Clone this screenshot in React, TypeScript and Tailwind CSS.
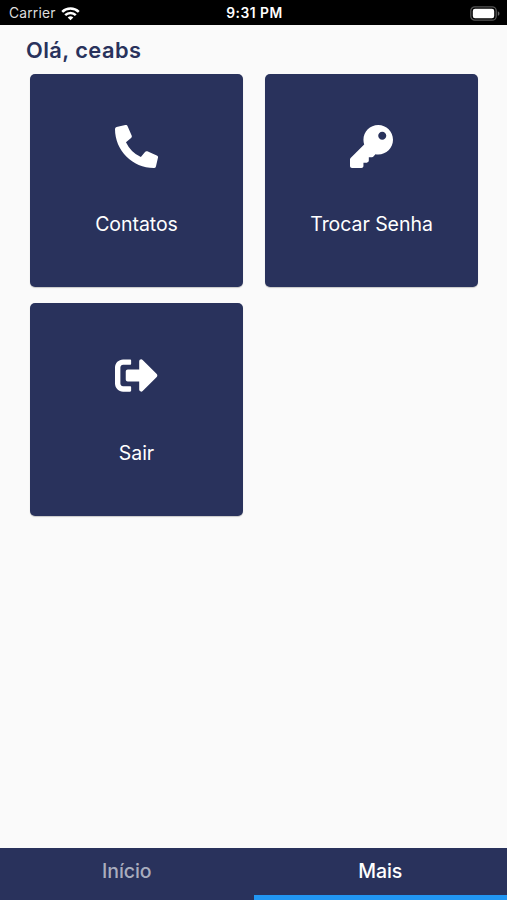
import type { IconType } from "react-icons";
import { FaKey, FaPhoneAlt, FaSignOutAlt } from "react-icons/fa";

interface MenuCardProps {
  title: string;
  icon: IconType;
}

const MenuCard: React.FC<MenuCardProps> = ({ title, icon: Icon }) => (
  <button className="flex h-[213px] w-[213px] flex-col items-center rounded-[5px] bg-[#29325c] pt-[51px] text-white shadow-[0_1px_1px_rgba(0,0,0,0.2)]">
    <Icon className="h-[43px] w-[43px]" />
    <span className="mt-[42px] text-[19.5px] leading-7 tracking-[-0.05px]">{title}</span>
  </button>
);

const WifiIcon: React.FC = () => (
  <svg className="h-[14px] w-[19px]" viewBox="0 0 19 14" fill="none" stroke="#fff" strokeWidth="2.5">
    <path d="M1.2 4.8a11.8 11.8 0 0 1 16.6 0" />
    <path d="M4.2 8.1a7.5 7.5 0 0 1 10.6 0" />
    <path d="M9.5 13.3 6.7 10.5a4 4 0 0 1 5.6 0z" fill="#fff" stroke="none" />
  </svg>
);

const BatteryIcon: React.FC = () => (
  <svg className="h-[15px] w-[30px]" viewBox="0 0 30 15">
    <rect x="0.8" y="0.8" width="25.4" height="13.4" rx="4" fill="none" stroke="#555" strokeWidth="1.3" />
    <rect x="2.8" y="2.8" width="21.4" height="9.4" rx="2.2" fill="#fff" />
    <path d="M27.8 5.2c2.2.8 2.2 3.8 0 4.6z" fill="#666" />
  </svg>
);

const StatusBar: React.FC = () => (
  <header className="grid h-[25px] grid-cols-3 items-center bg-black pt-[2px] pr-[7px] pl-[9px] text-white">
    <div className="flex items-center gap-[5px]">
      <span className="text-[13.8px] tracking-[0.2px] text-[#ddd]">Carrier</span>
      <WifiIcon />
    </div>
    <span className="text-center text-[13.8px] font-semibold tracking-[0.5px]">9:31 PM</span>
    <div className="flex justify-end">
      <BatteryIcon />
    </div>
  </header>
);

const App: React.FC = () => {
  return (
    <div className="flex h-screen flex-col bg-[#fafafa] font-['Inter',sans-serif]">
      <StatusBar />

      <main className="flex-1">
        <h1 className="mt-[10px] pl-[26px] text-[21.8px] leading-[30px] font-semibold tracking-[0.45px] text-[#29325c]">
          Olá, ceabs
        </h1>
        <div className="mt-[9px] grid grid-cols-[213px_213px] gap-x-[22px] gap-y-4 pl-[30px]">
          <MenuCard title="Contatos" icon={FaPhoneAlt} />
          <MenuCard title="Trocar Senha" icon={FaKey} />
          <MenuCard title="Sair" icon={FaSignOutAlt} />
        </div>
      </main>

      <nav className="grid h-[52px] grid-cols-2 bg-[#29325c] text-[19.5px] font-medium tracking-[-0.1px]">
        <button className="pb-1 text-[#a9adbe]">Início</button>
        <button className="border-b-[5px] border-[#2196f3] text-white">Mais</button>
      </nav>
    </div>
  );
};

export default App;
